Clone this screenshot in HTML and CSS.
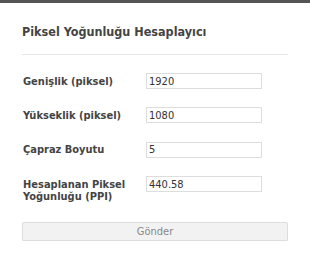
FILE: index.html
```html
<!DOCTYPE html>
<html lang="tr">
<head>
    <meta charset="UTF-8">
    <meta name="viewport" content="width=device-width, initial-scale=1.0">
    <title>Piksel Yoğunluğu Hesaplayıcı</title>
    <link rel="stylesheet" href="styles.css">
</head>
<body>
    <div class="calc-container">
        <h2 class="calc-title">Piksel Yoğunluğu Hesaplayıcı</h2>

        <form class="calc-form" onsubmit="return calculate()">
            <div class="form-row">
                <label for="width">Genişlik (piksel)</label>
                <input type="text" id="width" value="1920">
            </div>
            <div class="form-row">
                <label for="height">Yükseklik (piksel)</label>
                <input type="text" id="height" value="1080">
            </div>
            <div class="form-row">
                <label for="diagonal">Çapraz Boyutu</label>
                <input type="text" id="diagonal" value="5">
            </div>
            <div class="form-row">
                <label for="ppi">Hesaplanan Piksel Yoğunluğu (PPI)</label>
                <input type="text" id="ppi" value="440.58">
            </div>

            <button type="submit" class="submit-button">Gönder</button>
        </form>
    </div>

    <script>
        function calculate() {
            const w = parseFloat(document.getElementById('width').value);
            const h = parseFloat(document.getElementById('height').value);
            const d = parseFloat(document.getElementById('diagonal').value);

            if (w > 0 && h > 0 && d > 0) {
                const ppi = Math.sqrt(w * w + h * h) / d;
                document.getElementById('ppi').value = ppi.toFixed(2);
            }
            return false;
        }
    </script>
</body>
</html>
```

FILE: styles.css
```css
body {
    font-family: "DejaVu Sans Condensed", "DejaVu Sans", Tahoma, sans-serif;
    background-color: #fff;
    border-top: 3px solid #555;
    margin: 0;
    color: #444;
}

.calc-container {
    padding: 0 22px;
}

.calc-title {
    font-size: 12.5px;
    font-weight: bold;
    color: #444;
    margin: 0;
    padding: 21px 0 15px;
    border-bottom: 1px solid #e6e6e6;
}

.calc-form {
    padding-top: 18px;
}

.form-row {
    display: flex;
    align-items: baseline;
    height: 34.4px;
}

.form-row label {
    width: 106px;
    padding-left: 1px;
    margin-right: 17px;
    font-size: 11px;
    font-weight: bold;
    line-height: 12px;
}

.form-row input {
    width: 110px;
    height: 14px;
    padding: 0 2px;
    border: 1px solid #ddd;
    font-family: "DejaVu Sans Condensed", "DejaVu Sans", Tahoma, sans-serif;
    font-size: 11px;
    color: #333;
    outline: none;
}

.submit-button {
    display: block;
    width: 100%;
    height: 19px;
    margin-top: 11px;
    background-color: #f2f2f2;
    border: 1px solid #ddd;
    border-radius: 2px;
    box-shadow: 0 1px 0 #e8e8e8;
    font-family: "DejaVu Sans Condensed", "DejaVu Sans", Tahoma, sans-serif;
    font-size: 11px;
    color: #888;
    cursor: pointer;
}

.submit-button:hover {
    background-color: #eaeaea;
}
```
